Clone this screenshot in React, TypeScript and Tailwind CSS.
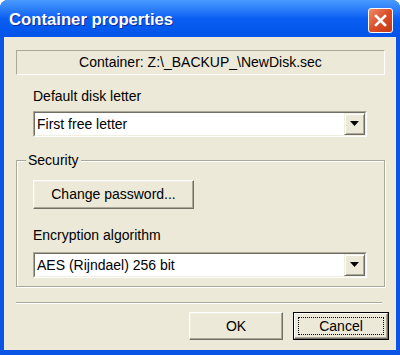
import React from 'react'

const font = { fontFamily: '"Liberation Sans", Arial, sans-serif' }

function DropArrow() {
  return (
    <svg width="9" height="6" viewBox="0 0 9 6">
      <path d="M0 0H9L4.5 5Z" fill="#000" />
    </svg>
  )
}

function Combo({ value }: { value: string }) {
  return (
    <div className="h-[26px] border border-t-[#aca899] border-l-[#aca899] border-b-white border-r-white">
      <div className="h-full flex items-center bg-white border border-t-[#716f64] border-l-[#716f64] border-b-[#f1efe2] border-r-[#f1efe2]">
        <span className="flex-1 pl-[2px] text-[14px] text-black leading-none">{value}</span>
        <div className="w-[21px] h-full flex items-center justify-center bg-[#ece9d8] border border-t-[#f1efe2] border-l-[#f1efe2] border-b-[#716f64] border-r-[#716f64] shadow-[inset_1px_1px_0_#fff,inset_-1px_-1px_0_#aca899]">
          <DropArrow />
        </div>
      </div>
    </div>
  )
}

function Button({ label, w, isDefault }: { label: string; w: string; isDefault?: boolean }) {
  if (isDefault) {
    return (
      <div className={`${w} h-[28px] border border-black`}>
        <div className="h-full flex items-center justify-center bg-[#ece9d8] border border-t-white border-l-white border-b-[#716f64] border-r-[#716f64] shadow-[inset_-1px_-1px_0_#aca899]">
          <div className="w-[calc(100%-6px)] h-[calc(100%-6px)] flex items-center justify-center border border-dotted border-black text-[14px] text-black">
            {label}
          </div>
        </div>
      </div>
    )
  }
  return (
    <div className={`${w} flex items-center justify-center bg-[#ece9d8] border border-t-white border-l-white border-b-[#716f64] border-r-[#716f64] shadow-[inset_-1px_-1px_0_#aca899,inset_1px_1px_0_#f1efe2] text-[14px] text-black`}>
      {label}
    </div>
  )
}

export default function App() {
  return (
    <div className="w-[400px] h-[355px] bg-white" style={font}>
      <div className="w-full h-full flex flex-col rounded-t-[8px] overflow-hidden bg-[#0b55e6]">
        {/* title bar */}
        <div className="h-[37px] shrink-0 flex items-center justify-between pt-[3px] pl-[9px] pr-[7px] bg-gradient-to-b from-[#4a9bff] via-[#0a5ef2] to-[#0254e8]">
          <span className="text-white font-bold text-[16.7px] [text-shadow:1px_1px_0_#0a2a9c]">Container properties</span>
          <div className="w-[25px] h-[25px] rounded-[3px] border border-white bg-gradient-to-br from-[#ec8a6a] via-[#dc4d26] to-[#c13a1a] flex items-center justify-center">
            <svg width="13" height="13" viewBox="0 0 13 13">
              <path d="M2 2L11 11M11 2L2 11" stroke="#fff" strokeWidth="2.6" strokeLinecap="square" />
            </svg>
          </div>
        </div>

        {/* body */}
        <div className="flex-1 mx-[4px] mb-[5px] bg-[#ece9d8] pt-[13px] pl-[12px] pr-[11px] text-black">
          <div className="h-[25px] flex items-center justify-center border border-t-[#aca899] border-l-[#aca899] border-b-white border-r-white text-[14px]">
            Container: Z:\_BACKUP_\NewDisk.sec
          </div>

          <div className="ml-[17px] mr-[18px]">
            <div className="mt-[13px] h-[16px] leading-[16px] text-[14px]">Default disk letter</div>
            <div className="mt-[7px]">
              <Combo value="First free letter" />
            </div>
          </div>

          {/* Security group */}
          <div className="relative mt-[23px] h-[127px] border border-[#aca899] shadow-[inset_1px_1px_0_#fff,1px_1px_0_#fff] pt-[19px] pl-[16px] pr-[17px]">
            <span className="absolute left-[9px] top-[-9px] px-[2px] bg-[#ece9d8] text-[14px] leading-[16px]">Security</span>
            <div className="flex">
              <Button label="Change password..." w="w-[161px] h-[29px]" />
            </div>
            <div className="mt-[18px] h-[16px] leading-[16px] text-[14px]">Encryption algorithm</div>
            <div className="mt-[9px]">
              <Combo value="AES (Rijndael) 256 bit" />
            </div>
          </div>

          <div className="mt-[15px] mr-[3px] h-[2px] border-t border-t-[#aca899] border-b border-b-white" />

          <div className="mt-[8px] flex justify-end gap-[10px] mr-[-4px]">
            <Button label="OK" w="w-[94px] h-[28px]" />
            <Button label="Cancel" w="w-[96px]" isDefault />
          </div>
        </div>
      </div>
    </div>
  )
}
